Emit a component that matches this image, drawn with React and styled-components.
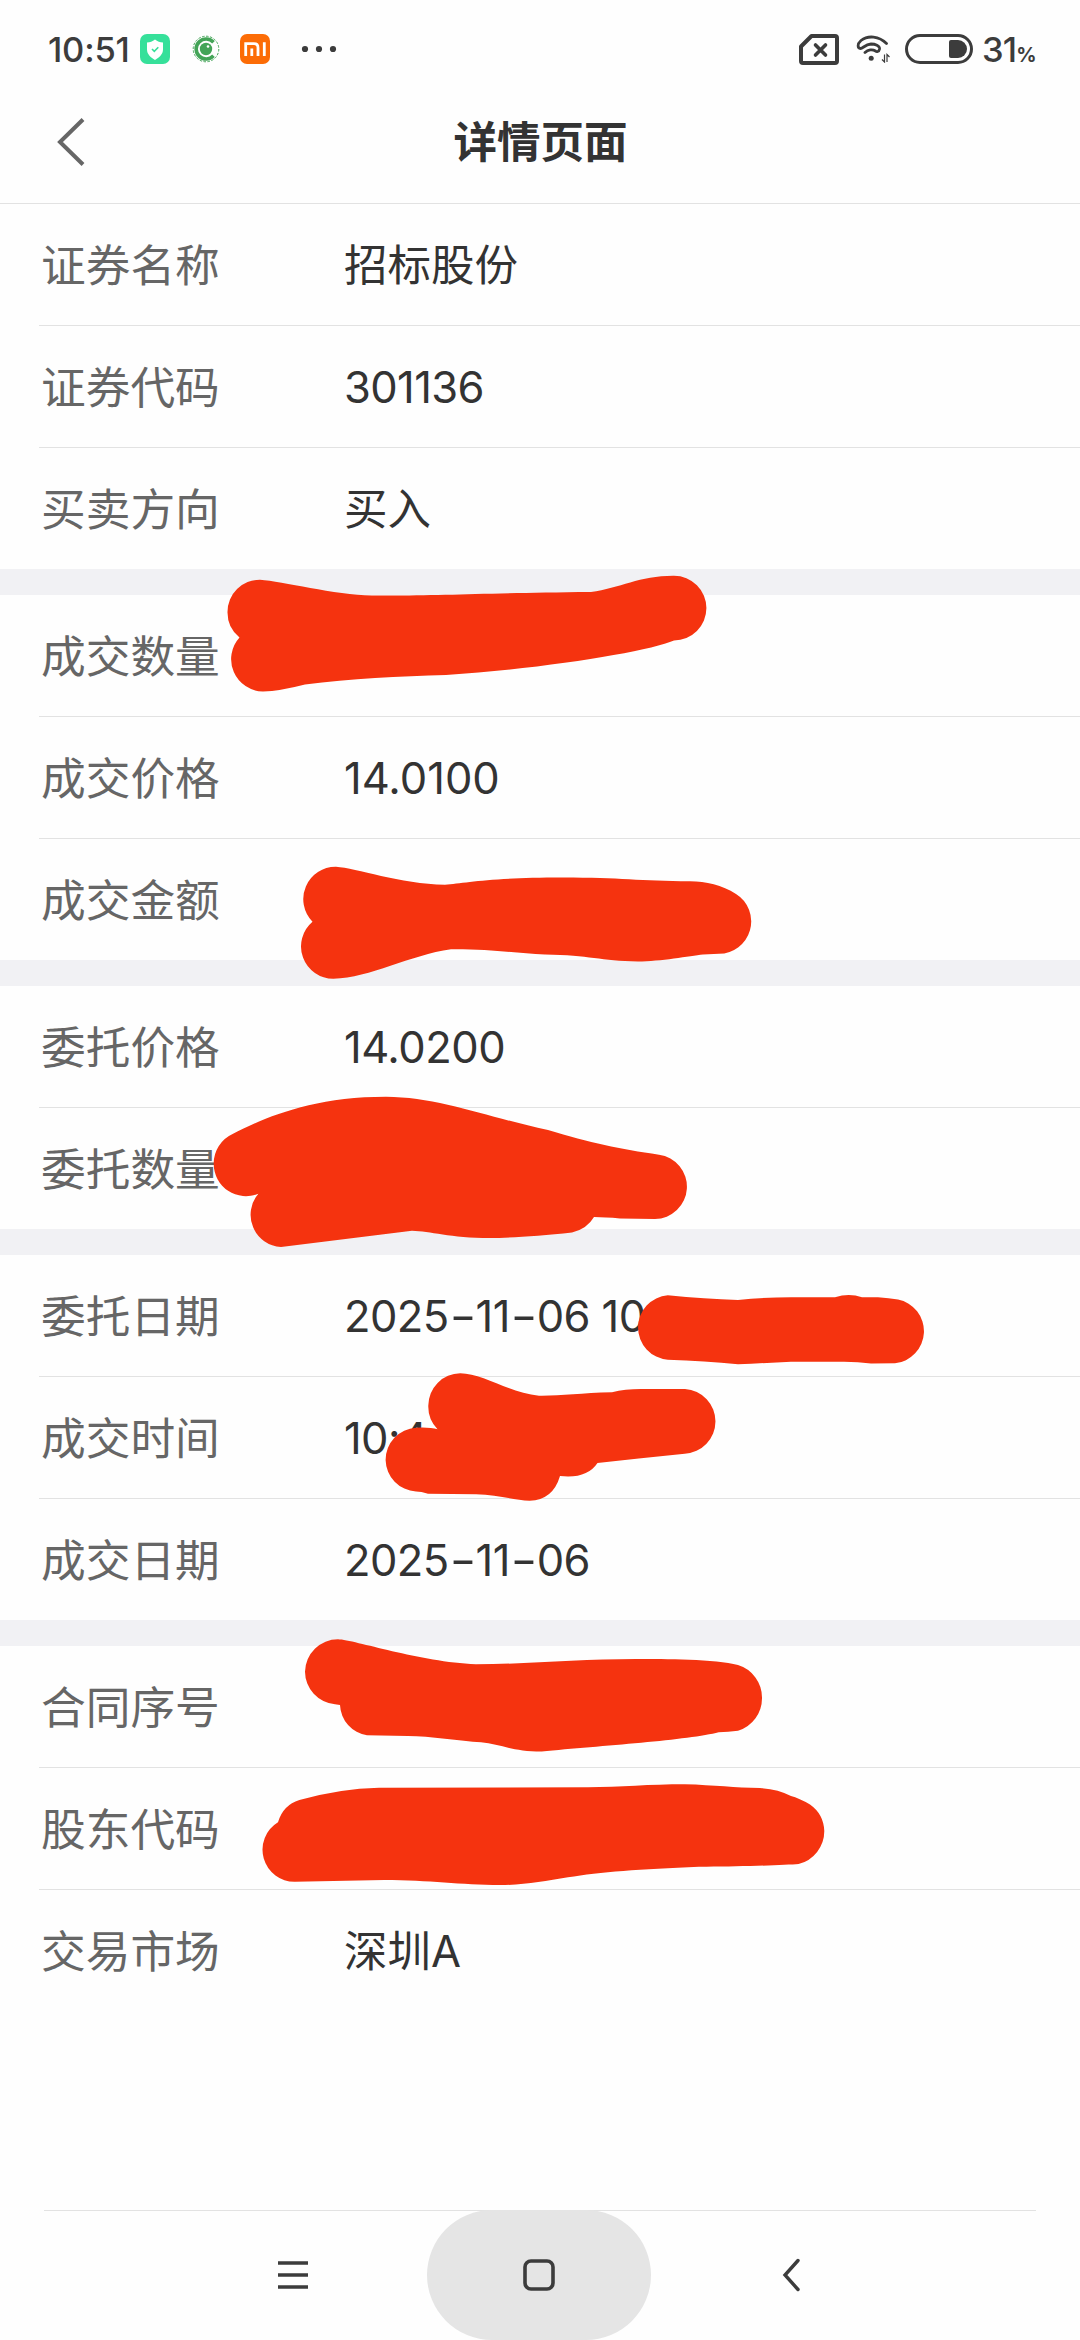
import React from "react";
import styled, { createGlobalStyle } from "styled-components";

const GlobalStyle = createGlobalStyle`
  * {
    box-sizing: border-box;
  }
  body {
    margin: 0;
    background: #ffffff;
    font-family: Inter, "Noto Sans CJK SC", sans-serif;
  }
`;

const Page = styled.div`
  position: relative;
  display: flex;
  flex-direction: column;
  width: 1080px;
  height: 2340px;
  background: #fefefe;
  overflow: hidden;
`;

const StatusBar = styled.div`
  display: flex;
  align-items: center;
  justify-content: space-between;
  height: 80px;
  padding: 18px 48px 0 48px;
  color: #3c3c3c;
`;

const StatusGroup = styled.div`
  display: flex;
  align-items: center;
  height: 62px;
`;

const Clock = styled.span`
  width: 92px;
  padding-top: 2px;
  font-size: 34.5px;
  line-height: 60px;
  font-weight: 500;
  letter-spacing: -0.2px;
  white-space: nowrap;
`;

const Percent = styled.span`
  width: 50px;
  margin-left: 9px;
  padding-top: 2px;
  font-size: 34.5px;
  line-height: 60px;
  font-weight: 500;
  letter-spacing: -0.8px;
  white-space: nowrap;
`;

const PercentSign = styled.span`
  font-size: 20px;
  font-weight: 700;
  line-height: 1;
`;

const Icon = styled.svg`
  display: block;
  flex: none;
  margin-left: ${(props) => props.$gap || 0}px;
`;

const Header = styled.header`
  display: grid;
  grid-template-columns: 200px 1fr 200px;
  align-items: center;
  height: 124px;
  border-bottom: 1px solid #e2e2e2;
`;

const BackButton = styled.button`
  display: flex;
  width: 100px;
  padding: 0 0 0 56px;
  border: none;
  background: none;
`;

const Title = styled.h1`
  margin: 0;
  padding-left: 1px;
  color: #333333;
  font-size: 43.5px;
  font-weight: 700;
  line-height: 64px;
  text-align: center;
`;

const Group = styled.section`
  border-bottom: ${(props) => (props.$last ? "none" : "26px solid #f1f1f4")};
`;

const Row = styled.div`
  display: flex;
  align-items: center;
  height: ${(props) => (props.$last ? 121 : 122)}px;
  margin-left: 39px;
  border-bottom: ${(props) => (props.$last ? "none" : "1px solid #e2e2e2")};
`;

const Label = styled.span`
  width: 305px;
  padding: 2px 0 0 2px;
  color: #666666;
  font-size: 44.7px;
  line-height: 60px;
`;

const Value = styled.span`
  color: #333333;
  font-size: 43.5px;
  line-height: 60px;
  letter-spacing: ${(props) => props.$spacing || 0}px;
  white-space: pre;
`;

const Dash = styled.span`
  display: inline-block;
  width: 27px;
  text-align: center;
  transform: scaleX(1.35);
`;

const Marks = styled.svg`
  position: absolute;
  top: 0;
  left: 0;
  pointer-events: none;
`;

const NavBar = styled.nav`
  display: flex;
  align-items: center;
  height: 130px;
  margin: auto 44px 0;
  padding-left: 179px;
  border-top: 1px solid #e2e2e2;
`;

const NavButton = styled.button`
  display: flex;
  justify-content: center;
  align-items: center;
  width: ${(props) => (props.$active ? 224 : 140)}px;
  height: 130px;
  margin: -1px 0 0 ${(props) => props.$gap || 0}px;
  padding: 0;
  border: none;
  border-radius: 65px;
  background: ${(props) => (props.$active ? "#e5e5e5" : "none")};
`;

const groups = [
  [
    { label: "证券名称", value: "招标股份" },
    { label: "证券代码", value: "301136", spacing: -0.6 },
    { label: "买卖方向", value: "买入" },
  ],
  [
    { label: "成交数量" },
    { label: "成交价格", value: "14.0100", spacing: 0 },
    { label: "成交金额" },
  ],
  [
    { label: "委托价格", value: "14.0200", spacing: -0.5 },
    { label: "委托数量" },
  ],
  [
    { label: "委托日期", value: "2025-11-06 10", spacing: -0.6 },
    { label: "成交时间", value: "10:4", spacing: -0.6 },
    { label: "成交日期", value: "2025-11-06", spacing: -0.6 },
  ],
  [
    { label: "合同序号" },
    { label: "股东代码" },
    { label: "交易市场", value: "深圳A" },
  ],
];

// Brush strokes that hide the private values
const marks = [
  "M239.5 637.5A32.3 32.3 0 0 1 227.5 612A32.3 32.3 0 0 1 260 579.7C282 581 335 595 372 595.5C440 596 480 593 591 592C620 588 640 575.5 674 575.7A32.3 32.3 0 0 1 674 640.5C650 651 550 668 446 675C400 676 350 679 305 684.5Q280 691 263 691.5A32.3 32.3 0 0 1 239.5 637.5Z",
  "M312.5 921.7A32.3 32.3 0 0 1 336 866.8C356 868 400 884 445 884.8C465 883 490 877.5 563 877.5C620 877.5 640 881 690 881.3C706 881.5 722 885 736 894A32.3 32.3 0 0 1 719 953.7L703 954.5C690 956 660 961.5 638 961.5C600 961 590 955 545 954.5C515 953 490 949 451 949.3C410 955 370 978 333.5 978.7A32.3 32.3 0 0 1 312.5 921.7Z",
  "M258.4 1193.7A32.3 32.3 0 0 1 213.7 1164A32.3 32.3 0 0 1 232.6 1134C262 1119 310 1096.7 386 1096.7C440 1097 490 1118 548 1130C590 1143 620 1149 659 1154.7A32.3 32.3 0 0 1 655 1219L620 1218.5Q605 1217 594 1217Q587 1229 572 1232.5C540 1236 510 1238 490 1238C450 1238 430 1231 412 1230.7L281 1247A32.3 32.3 0 0 1 258.4 1193.7Z",
  "M667.8 1295.3Q705 1299 738 1300Q765 1297.3 791 1297.3L835 1297.3Q849 1292.5 862 1297.3L878 1297.3Q889 1298 898 1299.5A32.3 32.3 0 0 1 895 1363.3L871 1363.5Q858 1361.7 844 1361.7L791 1361.7Q765 1363 738 1364.3Q705 1361 667.8 1359.7A32.3 32.3 0 0 1 667.8 1295.3Z",
  "M437.5 1429.3A32.3 32.3 0 0 1 428.3 1405.7A32.3 32.3 0 0 1 460.3 1373.3C482 1373.3 510 1393 539 1395.7C560 1396 580 1393 612 1392.3Q625 1389 641 1389L685 1389A32.4 32.4 0 0 1 684.7 1453.7L638.7 1458.5L597.5 1463Q587 1479 560 1476Q553 1500 529.6 1500.7C515 1500 498 1495 476 1494.3L428 1493.7Q421 1491.5 416 1491.5A32.3 32.3 0 0 1 385.6 1460A32.3 32.3 0 0 1 416 1427.7Q430 1427 437.5 1429.3Z",
  "M340 1705L335 1704.3A33 33 0 0 1 305 1671.7A33 33 0 0 1 338 1639.3C355 1640 420 1662 476 1664.3C530 1664 580 1659 636 1659C665 1659 715 1659 738 1665A34 34 0 0 1 762 1697.7A34 34 0 0 1 738 1730.7Q728 1732 718.7 1732.3C690 1740 600 1746 541.7 1751.5C512 1751.5 500 1744 481 1742.3C460 1741 430 1736 408 1736L367 1735.3A32 32 0 0 1 340 1705Z",
  "M278 1822.3Q283 1805 299.4 1800Q340 1788.5 379 1787.7L588 1787.3C620 1787 650 1784.3 684.7 1784.3C715 1785 735 1788 760 1788Q778 1789 791 1796Q799 1798 810 1804.5A34 34 0 0 1 824.3 1831A34 34 0 0 1 798.6 1864C785 1865 735 1867 699 1866.7C640 1869 600 1872 568 1877.3C545 1881 525 1885 500.5 1885C460 1885 430 1880 384 1880L295 1881.7A32 32 0 0 1 278 1822.3Z",
];

const App = () => {
  return (
    <Page>
      <GlobalStyle />
      <StatusBar>
        <StatusGroup>
          <Clock>10:51</Clock>
          <Icon width="30" height="30" viewBox="0 0 30 30">
            <rect width="30" height="30" rx="7" fill="#36e09a" />
            <path
              d="M15 5.5c2.5 2 5 2.8 8 3v7c0 5-4 8-8 10.5c-4-2.5-8-5.5-8-10.5v-7c3-.2 5.5-1 8-3z"
              fill="#fff"
            />
            <path
              d="M12 15l2.300 2.300 4-4"
              fill="none"
              stroke="#36e09a"
              strokeWidth="1.600"
            />
          </Icon>
          <Icon $gap={21.5} width="28" height="28" viewBox="0 0 28 28">
            <circle
              cx="14"
              cy="14"
              r="12.8"
              fill="none"
              stroke="#43a457"
              strokeWidth="1"
              strokeDasharray="2.5 1.5"
            />
            <path
              d="M21.5 7.2A10 10 0 1 0 21.5 20.8"
              fill="none"
              stroke="#43a457"
              strokeWidth="3.6"
            />
            <circle cx="14" cy="14" r="6.2" fill="#43a457" />
            <circle cx="16" cy="11.5" r="1.3" fill="#fff" />
          </Icon>
          <Icon $gap={20.5} width="30" height="30" viewBox="0 0 30 30">
            <rect width="30" height="30" rx="7" fill="#fc6c06" />
            <path
              d="M5.7 22V9.7H14q4 0 4 4V22M11.8 14.5V22M24.3 8.3V22"
              fill="none"
              stroke="#fff"
              strokeWidth="2.8"
            />
          </Icon>
          <Icon $gap={31} width="36" height="8" viewBox="0 0 36 8" fill="#3c3c3c">
            <circle cx="4" cy="4" r="3.1" />
            <circle cx="18" cy="4" r="3.1" />
            <circle cx="32" cy="4" r="3.1" />
          </Icon>
        </StatusGroup>
        <StatusGroup>
          <Icon width="40" height="32" viewBox="0 0 40 32" fill="none" stroke="#3c3c3c">
            <path
              d="M12.5 3H36q2 0 2 2V28q0 2-2 2H4q-2 0-2-2V13.5z"
              strokeWidth="4"
              strokeLinejoin="round"
            />
            <path d="M16.5 12l10 10M26.5 12l-10 10" strokeWidth="3.6" strokeLinecap="round" />
          </Icon>
          <Icon $gap={17} width="34" height="28" viewBox="0 0 34 28" fill="none" stroke="#3c3c3c">
            <path
              d="M30.5 8.500C23 1 12 0 5 5.500C1 9 1.500 13.500 4.500 13.500C7 13.500 9 9.500 15 9C19 9 24 10.500 23.500 14C23 17 20.500 17 19.500 16C16.500 14 12 14.500 9 17.500"
              strokeWidth="2.800"
              strokeLinecap="round"
              strokeLinejoin="round"
            />
            <circle cx="15.2" cy="23.2" r="2.5" fill="#3c3c3c" stroke="none" />
            <path d="M28.5 19.500v7.500l-2.500-2.500M31 27v-7.500l2.500 2.500" strokeWidth="1.200" />
          </Icon>
          <Icon $gap={15} width="68" height="30" viewBox="0 0 68 30">
            <rect
              x="1.5"
              y="1.5"
              width="65"
              height="27"
              rx="13.5"
              fill="none"
              stroke="#3c3c3c"
              strokeWidth="3"
            />
            <path d="M46 6H53a9 9 0 0 1 0 18H46q-2 0-2-2V8q0-2 2-2z" fill="#3c3c3c" />
          </Icon>
          <Percent>
            31<PercentSign>%</PercentSign>
          </Percent>
        </StatusGroup>
      </StatusBar>

      <Header>
        <BackButton>
          <Icon width="30" height="50" viewBox="0 0 30 50">
            <path d="M27 2.500L4 25L27 47.500" fill="none" stroke="#666" strokeWidth="4" />
          </Icon>
        </BackButton>
        <Title>详情页面</Title>
      </Header>

      {groups.map((rows, i) => (
        <Group key={i} $last={i === groups.length - 1}>
          {rows.map((row, j) => (
            <Row key={row.label} $last={j === rows.length - 1}>
              <Label>{row.label}</Label>
              <Value $spacing={row.spacing}>
                {row.value &&
                  row.value.split("-").map((part, k) => (
                    <React.Fragment key={k}>
                      {k > 0 && <Dash>-</Dash>}
                      {part}
                    </React.Fragment>
                  ))}
              </Value>
            </Row>
          ))}
        </Group>
      ))}

      <NavBar>
        <NavButton>
          <Icon width="30" height="30" viewBox="0 0 30 30">
            <path d="M0 3H30M0 15H30M0 27H30" stroke="#3c3c3c" strokeWidth="3.5" />
          </Icon>
        </NavButton>
        <NavButton $active $gap={64}>
          <Icon width="32" height="32" viewBox="0 0 32 32">
            <rect
              x="2"
              y="2"
              width="28"
              height="28"
              rx="6"
              fill="none"
              stroke="#3c3c3c"
              strokeWidth="3.6"
            />
          </Icon>
        </NavButton>
        <NavButton $gap={70}>
          <Icon width="18" height="34" viewBox="0 0 18 34">
            <path
              d="M16 2.500L3 17L16 31.500"
              fill="none"
              stroke="#3c3c3c"
              strokeWidth="3.4"
              strokeLinecap="round"
            />
          </Icon>
        </NavButton>
      </NavBar>

      <Marks width="1080" height="2340" viewBox="0 0 1080 2340" fill="#f5330f">
        {marks.map((d) => (
          <path key={d} d={d} />
        ))}
      </Marks>
    </Page>
  );
};

export default App;
